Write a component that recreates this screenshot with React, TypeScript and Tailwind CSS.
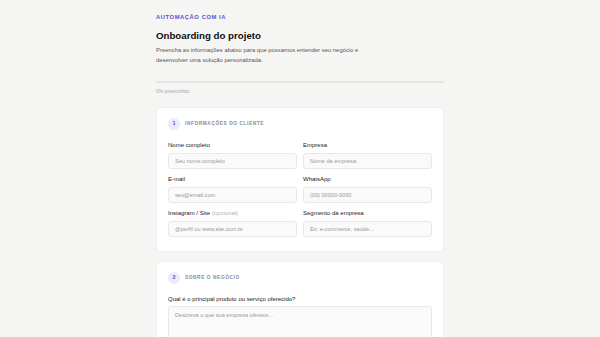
import React from 'react';

const Field = ({ label, hint, placeholder }: { label: string; hint?: string; placeholder: string }) => (
  <div className="flex flex-col">
    <label className="text-[6px] leading-[10px] text-[#222] mb-[3px]">
      {label} {hint && <span className="text-[#b3b3b3]">{hint}</span>}
    </label>
    <input
      type="text"
      placeholder={placeholder}
      className="h-[16px] w-full rounded-[3px] border border-[#e8e8e8] bg-[#fafafa] px-[6px] text-[5.6px] text-[#333] placeholder:text-[#999] outline-none"
    />
  </div>
);

const SectionHeader = ({ n, title }: { n: number; title: string }) => (
  <div className="flex items-center gap-[5px]">
    <span className="flex h-[12px] w-[12px] items-center justify-center rounded-full bg-[#ecebfb] text-[5.5px] font-bold text-[#5b50d6]">
      {n}
    </span>
    <span className="text-[4.8px] font-bold tracking-[0.12em] text-[#8c8c8c]">{title}</span>
  </div>
);

export default function App() {
  return (
    <div className="min-h-[337px] w-full bg-[#f5f5f3] font-['Liberation_Sans',Arial,sans-serif]">
      <div className="mx-auto w-[288px] pt-[15px] pb-[20px]">
        <p className="text-[5.8px] font-bold tracking-[0.1em] text-[#5b50d6] leading-[5px]">AUTOMAÇÃO COM IA</p>
        <h1 className="mt-[9px] text-[9.7px] font-bold text-[#111] leading-[14px]">Onboarding do projeto</h1>
        <p className="mt-[2px] w-[205px] text-[5.9px] leading-[10px] text-[#555]">
          Preencha as informações abaixo para que possamos entender seu negócio e desenvolver uma solução personalizada.
        </p>

        <div className="mt-[16px] h-[1.5px] w-full bg-[#e4e4e2]" />
        <p className="mt-[4px] text-[5px] leading-[8px] text-[#aaa]">0% preenchido</p>

        <section className="mt-[12px] rounded-[5px] border border-[#efefed] bg-white px-[11px] pt-[10px] pb-[14px]">
          <SectionHeader n={1} title="INFORMAÇÕES DO CLIENTE" />
          <div className="mt-[10px] grid grid-cols-2 gap-x-[6px] gap-y-[5px]">
            <Field label="Nome completo" placeholder="Seu nome completo" />
            <Field label="Empresa" placeholder="Nome da empresa" />
            <Field label="E-mail" placeholder="seu@email.com" />
            <Field label="WhatsApp" placeholder="(00) 00000-0000" />
            <Field label="Instagram / Site" hint="(opcional)" placeholder="@perfil ou www.site.com.br" />
            <Field label="Segmento da empresa" placeholder="Ex: e-commerce, saúde..." />
          </div>
        </section>

        <section className="mt-[9px] rounded-[5px] border border-[#efefed] bg-white px-[11px] pt-[10px] pb-[16px]">
          <SectionHeader n={2} title="SOBRE O NEGÓCIO" />
          <div className="mt-[10px] flex flex-col">
            <label className="text-[6px] leading-[10px] text-[#222] mb-[2px]">Qual é o principal produto ou serviço oferecido?</label>
            <textarea
              rows={4}
              placeholder="Descreva o que sua empresa oferece..."
              className="h-[50px] w-full resize-none rounded-[3px] border border-[#e8e8e8] bg-[#fafafa] px-[6px] py-[4px] text-[5.6px] text-[#333] placeholder:text-[#999] outline-none"
            />
          </div>
        </section>
      </div>
    </div>
  );
}
